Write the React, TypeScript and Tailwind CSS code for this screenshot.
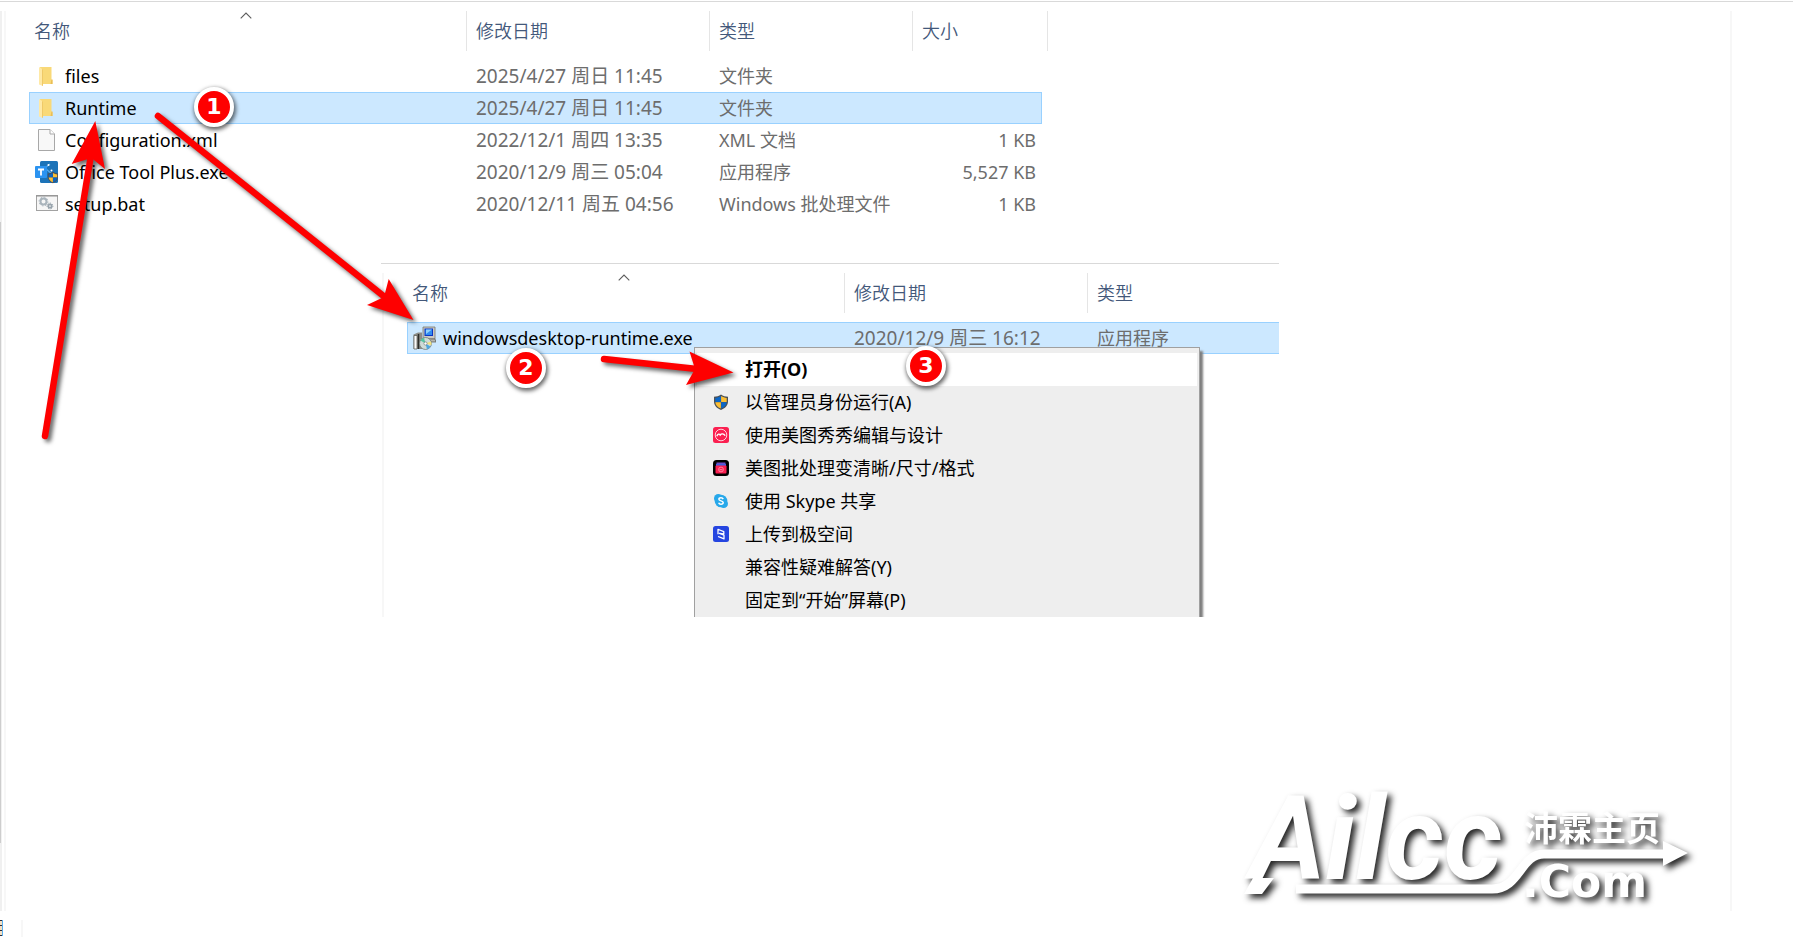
import type { ReactNode } from 'react';

interface FileEntry {
  name: string;
  date: string;
  type: string;
  size?: string;
  icon: ReactNode;
  selected?: boolean;
}

interface MenuEntry {
  label: string;
  icon?: ReactNode;
  active?: boolean;
}

const SHIELD = 'M8 0.5C10 2 12.500 2.700 15 2.700V7.500C15 11.500 12 14.500 8 16C4 14.500 1 11.500 1 7.500V2.700C3.500 2.700 6 2 8 0.500Z';

function ShieldShape(): JSX.Element {
  return (
    <>
      <path d={SHIELD} fill="#4b5158" />
      <path d="M7.900 2C6 3.200 4.300 3.800 2.300 3.900V8H7.900Z" fill="#0a66c8" />
      <path d="M8.100 2C10 3.200 11.700 3.800 13.700 3.900V8H8.100Z" fill="#fcbf34" />
      <path d="M2.300 8.200H7.900V14.600C4.600 13.300 2.500 11 2.300 8.200Z" fill="#fcbf34" />
      <path d="M13.700 8.200H8.100V14.600C11.400 13.300 13.500 11 13.700 8.200Z" fill="#0a66c8" />
    </>
  );
}

function FolderIcon(): JSX.Element {
  return (
    <svg className="h-6 w-6 shrink-0" viewBox="0 0 24 24" aria-hidden="true">
      <path d="M6 3H17.500V15.500L18.500 16V20H8Z" fill="#f9d978" />
      <path d="M17.500 15.500h1V20h-2z" fill="#e9bd57" />
      <path d="M5 3L9 5.500V22L5 20.500Z" fill="#ffe9a6" />
      <path d="M9 5.500V22l-1-.4V5z" fill="#efc968" />
    </svg>
  );
}

function PageIcon(): JSX.Element {
  return (
    <svg className="h-6 w-6 shrink-0" viewBox="0 0 24 24" aria-hidden="true">
      <path d="M4.500 1.500H16L20.500 6V22.500H4.500Z" fill="#f8f8f8" stroke="#a8a8a8" />
      <path d="M16 1.500V6H20.500" fill="#fff" stroke="#a8a8a8" />
    </svg>
  );
}

function OfficeToolIcon(): JSX.Element {
  return (
    <svg className="h-6 w-6 shrink-0" viewBox="0 0 24 24" aria-hidden="true">
      <rect x="6" y="1" width="18" height="22" rx="1.500" fill="#1c73b8" />
      <path d="M11 8l5-4M12 9l6 5" stroke="#57a9e6" strokeWidth="1.200" fill="none" />
      <circle cx="14.500" cy="5" r="1" fill="#fff" />
      <circle cx="17.500" cy="10.500" r="1" fill="#fff" />
      <rect x="1" y="6" width="12" height="12" rx="1" fill="#2b93f0" />
      <path d="M4 9.500H10M7 9.500V15.500" stroke="#fff" strokeWidth="1.800" />
      <g transform="translate(13 11.500) scale(0.740)">
        <ShieldShape />
      </g>
    </svg>
  );
}

function BatchIcon(): JSX.Element {
  return (
    <svg className="h-6 w-6 shrink-0" viewBox="0 0 24 24" aria-hidden="true">
      <rect x="2.500" y="3.500" width="21" height="15" fill="#f6f6f6" stroke="#a2a2a2" />
      <path d="M2 4H24" stroke="#8f8f8f" />
      <circle cx="9.500" cy="9.500" r="3" fill="none" stroke="#a9b4bc" strokeWidth="2" />
      <circle cx="9.500" cy="9.500" r="4.400" fill="none" stroke="#a9b4bc" strokeDasharray="1.700 1.700" />
      <circle cx="16" cy="14" r="1.700" fill="none" stroke="#97a3ac" strokeWidth="1.700" />
      <circle cx="16" cy="14" r="2.900" fill="none" stroke="#97a3ac" strokeDasharray="1.300 1.300" />
    </svg>
  );
}

function InstallerIcon(): JSX.Element {
  return (
    <svg className="h-6 w-6 shrink-0" viewBox="0 0 24 24" aria-hidden="true">
      <path d="M11 1H23V13H11Z" fill="#c9c9c4" stroke="#77776f" strokeWidth="0.800" />
      <path d="M12.500 2.500H21V10H12.500Z" fill="#0b35c4" />
      <path d="M13.500 3.500H20V9H13.500Z" fill="#2f8bf0" />
      <path d="M14 3.500H20L14 8Z" fill="#8fd0fb" />
      <path d="M14 13h9l1 3h-10z" fill="#b5b5ae" stroke="#55554f" strokeWidth="0.700" />
      <path d="M1.500 8.500L6 6.500H10V23H1.500Z" fill="#8d8d88" />
      <path d="M2 9.500H5V23H2Z" fill="#fafafa" stroke="#55554f" strokeWidth="0.700" />
      <path d="M6.500 8V23" stroke="#2c2c2a" strokeWidth="1.500" />
      <circle cx="13.500" cy="17.500" r="6" fill="#cfdcd8" stroke="#67716e" strokeWidth="0.700" />
      <path d="M13.500 17.500L8.500 14.500A6 6 0 0 1 12 11.700Z" fill="#58c4a0" />
      <path d="M13.500 17.500L18.500 20.500A6 6 0 0 1 15 23.200Z" fill="#4fa6e0" />
      <path d="M13.500 17.500L19 15.500A6 6 0 0 1 19.400 19Z" fill="#f3e27b" />
      <circle cx="13.500" cy="17.500" r="1.600" fill="#fff" stroke="#67716e" strokeWidth="0.600" />
    </svg>
  );
}

function AdminShieldIcon(): JSX.Element {
  return (
    <svg className="h-4 w-4" viewBox="0 0 16 16" aria-hidden="true">
      <ShieldShape />
    </svg>
  );
}

function MeituIcon(): JSX.Element {
  return (
    <svg className="h-4 w-4" viewBox="0 0 16 16" aria-hidden="true">
      <rect width="16" height="16" rx="2.500" fill="#fb1f50" />
      <circle cx="8" cy="8" r="5.800" fill="none" stroke="#ffd3dd" strokeWidth="1" />
      <path d="M3.800 9.300C4.800 6.800 6.300 6.600 7.200 8C8.300 6.400 10.500 6.300 12.200 8.600" fill="none" stroke="#fff" strokeWidth="1.400" />
    </svg>
  );
}

function MeituBatchIcon(): JSX.Element {
  return (
    <svg className="h-4 w-4" viewBox="0 0 16 16" aria-hidden="true">
      <rect width="16" height="16" rx="3.500" fill="#000" />
      <rect x="3.500" y="2.500" width="9" height="3" fill="#6d50c8" />
      <rect x="3" y="4" width="10" height="2" fill="#3f62e0" />
      <rect x="2.500" y="5.500" width="11" height="8" rx="1" fill="#fb1f50" />
      <circle cx="8" cy="9.500" r="2.400" fill="none" stroke="#ff8da6" strokeWidth="0.900" />
      <path d="M6.500 9.700H9.500" stroke="#ff8da6" />
    </svg>
  );
}

function SkypeIcon(): JSX.Element {
  return (
    <svg className="h-4 w-4" viewBox="0 0 16 16" aria-hidden="true">
      <circle cx="5.300" cy="5.300" r="4.300" fill="#28a8ea" />
      <circle cx="10.700" cy="10.700" r="4.300" fill="#28a8ea" />
      <circle cx="8" cy="8" r="6.300" fill="#28a8ea" />
      <path
        d="M10.200 6.100C9.800 5.100 9 4.800 8 4.800C6.700 4.800 5.900 5.400 5.900 6.300C5.900 8.300 10.200 7.500 10.200 9.600C10.200 10.600 9.300 11.200 8 11.200C6.800 11.200 6 10.800 5.700 9.800"
        fill="none"
        stroke="#fff"
        strokeWidth="1.500"
      />
    </svg>
  );
}

function CloudSpaceIcon(): JSX.Element {
  return (
    <svg className="h-4 w-4" viewBox="0 0 16 16" aria-hidden="true">
      <rect width="16" height="16" rx="2.500" fill="#2545e0" />
      <path
        d="M5 8.200V3.300L8 4.500L10.800 5.700V8L6.500 7.300L11 9.200V12.900L8 11.700L5 10.500"
        fill="none"
        stroke="#fff"
        strokeWidth="1.300"
        strokeLinejoin="round"
      />
    </svg>
  );
}

const rootFiles: FileEntry[] = [
  { name: 'files', date: '2025/4/27 周日 11:45', type: '文件夹', icon: <FolderIcon /> },
  { name: 'Runtime', date: '2025/4/27 周日 11:45', type: '文件夹', icon: <FolderIcon />, selected: true },
  { name: 'Configuration.xml', date: '2022/12/1 周四 13:35', type: 'XML 文档', size: '1 KB', icon: <PageIcon /> },
  { name: 'Office Tool Plus.exe', date: '2020/12/9 周三 05:04', type: '应用程序', size: '5,527 KB', icon: <OfficeToolIcon /> },
  { name: 'setup.bat', date: '2020/12/11 周五 04:56', type: 'Windows 批处理文件', size: '1 KB', icon: <BatchIcon /> },
];

const runtimeFiles: FileEntry[] = [
  {
    name: 'windowsdesktop-runtime.exe',
    date: '2020/12/9 周三 16:12',
    type: '应用程序',
    icon: <InstallerIcon />,
    selected: true,
  },
];

const menuEntries: MenuEntry[] = [
  { label: '打开(O)', active: true },
  { label: '以管理员身份运行(A)', icon: <AdminShieldIcon /> },
  { label: '使用美图秀秀编辑与设计', icon: <MeituIcon /> },
  { label: '美图批处理变清晰/尺寸/格式', icon: <MeituBatchIcon /> },
  { label: '使用 Skype 共享', icon: <SkypeIcon /> },
  { label: '上传到极空间', icon: <CloudSpaceIcon /> },
  { label: '兼容性疑难解答(Y)' },
  { label: '固定到“开始”屏幕(P)' },
];

function SortCaret(): JSX.Element {
  return (
    <svg className="absolute top-px left-[211px] h-[7px] w-3" viewBox="0 0 12 7" aria-hidden="true">
      <path d="M0.700 6.300L6 1L11.300 6.300" fill="none" stroke="#5c5c5c" strokeWidth="1.100" />
    </svg>
  );
}

function FileTable({ files, showSize = false }: { files: FileEntry[]; showSize?: boolean }): JSX.Element {
  const cell = (file: FileEntry): string =>
    file.selected ? 'border-y border-[#99d1ff] bg-[#cce8ff]' : 'border-y border-transparent';
  const heading = 'h-10 border-r border-[#e5e5e5] p-0 pl-[9px] text-left text-lg font-[350] text-[#43587a]';

  return (
    <table className={`table-fixed border-separate border-spacing-0 ${showSize ? 'w-[1019px]' : 'w-full'}`}>
      <colgroup>
        <col className="w-[438px]" />
        <col className="w-[243px]" />
        {showSize ? <col className="w-[203px]" /> : <col />}
        {showSize && <col className="w-[129px]" />}
        {showSize && <col className="w-[6px]" />}
      </colgroup>
      <thead>
        <tr>
          <th className="relative h-10 border-r border-[#e5e5e5] p-0 pl-[5px] text-left text-lg font-[350] text-[#43587a]">
            <button type="button">名称</button>
            <SortCaret />
          </th>
          <th className={heading}>
            <button type="button">修改日期</button>
          </th>
          <th className={showSize ? heading : 'p-0 pl-[9px] text-left text-lg font-[350] text-[#43587a]'}>
            <button type="button">类型</button>
          </th>
          {showSize && (
            <th colSpan={2} className={heading}>
              <button type="button">大小</button>
            </th>
          )}
        </tr>
        <tr className="h-[9px]" />
      </thead>
      <tbody className="text-[18px] leading-6 whitespace-nowrap text-[#6d6d6d]">
        {files.map((file) => (
          <tr key={file.name} className="h-8">
            <td className={`p-0 pl-1 text-black ${cell(file)} border-l`}>
              <div className="flex items-center gap-[7px]">
                {file.icon}
                {file.name}
              </div>
            </td>
            <td className={`p-0 pl-[9px] text-[19px] ${cell(file)}`}>{file.date}</td>
            <td className={`p-0 pl-[9px] ${cell(file)}`}>{file.type}</td>
            {showSize && <td className={`p-0 pr-[5px] text-right ${cell(file)} border-r`}>{file.size}</td>}
          </tr>
        ))}
      </tbody>
    </table>
  );
}

function ContextMenu(): JSX.Element {
  return (
    <div
      role="menu"
      className="absolute top-[83px] left-[313px] w-[506px] border border-b-0 border-[#a0a0a0] bg-[#eeeeee] px-[2px] pt-[5px] shadow-[3px_4px_2px_#7f7f7f]"
    >
      {menuEntries.map((entry) => (
        <button
          key={entry.label}
          type="button"
          role="menuitem"
          className={`flex h-[33px] w-full items-center pb-[2px] text-left text-lg text-black ${entry.active ? 'bg-white font-bold' : ''}`}
        >
          <span className="flex w-12 shrink-0 justify-center">{entry.icon}</span>
          {entry.label}
        </button>
      ))}
    </div>
  );
}

function RuntimeWindow(): JSX.Element {
  return (
    <section className="absolute top-[252px] left-[375px] flex h-[354px] w-[898px] overflow-hidden border-t border-[#d9d9d9] bg-white pt-[9px]">
      <div className="ml-px w-[2px] bg-[#f7f7f7]" />
      <div className="ml-[23px] flex-1">
        <FileTable files={runtimeFiles} />
      </div>
      <ContextMenu />
    </section>
  );
}

function Arrows(): JSX.Element {
  return (
    <svg
      className="pointer-events-none absolute top-0 left-0 h-[460px] w-[760px] [filter:drop-shadow(3px_3px_2px_rgba(0,0,0,0.600))]"
      viewBox="0 0 760 460"
      aria-hidden="true"
    >
      <g fill="none" stroke="#fe0000" strokeWidth="6.500" strokeLinecap="round">
        <path d="M45 436L91 155" />
        <path d="M158 116L386 298" />
        <path d="M604 359L697 369" />
      </g>
      <g fill="#fe0000">
        <path d="M95.300 121L105 169L91.500 158L71.700 164Z" />
        <path d="M413.500 320L367 305L384 297L388.700 279Z" />
        <path d="M733.500 372.500L686 385L695 369L689.500 351.500Z" />
      </g>
    </svg>
  );
}

function Step({ value, place }: { value: number; place: string }): JSX.Element {
  return (
    <span
      className={`absolute flex h-10 w-10 items-center justify-center rounded-full border-4 border-white bg-[#fe0000] font-['DejaVu_Sans',sans-serif] text-[22px] leading-none font-bold text-white shadow-[1px_2px_4px_1px_rgba(0,0,0,0.600)] ${place}`}
    >
      {value}
    </span>
  );
}

function SiteLogo(): JSX.Element {
  return (
    <svg
      className="mt-auto mr-5 h-[171px] w-[480px] self-end [filter:drop-shadow(4px_4px_3px_rgba(0,0,0,0.850))]"
      viewBox="0 -30 480 171"
      role="img"
      aria-label="Ailcc.com"
    >
      <g fill="#fff">
        <text x="20" y="109" fontSize="116" fontWeight="700" fontStyle="italic" fontFamily="Roboto, sans-serif">
          Ailcc
        </text>
        <text x="294" y="71" fontSize="34" fontWeight="700" fontFamily="'Noto Sans CJK SC', sans-serif">
          沛霖主页
        </text>
        <text x="292" y="127" fontSize="44" fontWeight="700" fontFamily="'DejaVu Sans', sans-serif">
          .Com
        </text>
        <path d="M433 71L458 83L433 96Z" />
        <path d="M23 108H44L32 124H14Z" />
      </g>
      <path d="M66 119H262C290 119 290 84 314 84H434" fill="none" stroke="#fff" strokeWidth="9" />
    </svg>
  );
}

export default function App(): JSX.Element {
  return (
    <div className="relative flex min-h-screen flex-col overflow-hidden bg-white pt-px font-['Noto_Sans','Noto_Sans_CJK_SC',sans-serif]">
      <div className="mb-[9px] h-px bg-[#d9d9d9]" />

      <div className="flex flex-1">
        {/* Navigation pane scrollbar and splitter */}
        <div className="w-[2px] bg-[#f0f0f0] pt-[211px]">
          <div className="h-[621px] w-px bg-[#cdcdcd]" />
        </div>
        <div className="ml-[2px] w-[2px] bg-[#f7f7f7]" />

        <main className="relative flex flex-1 flex-col">
          <div className="ml-[23px]">
            <FileTable files={rootFiles} showSize />
          </div>
          <RuntimeWindow />
          <SiteLogo />
        </main>

        <div className="mr-[61px] w-[2px] bg-[#f7f7f7]" />
      </div>

      {/* Status bar */}
      <footer className="flex h-9 items-start gap-[18px] pt-[9px]">
        <div className="flex h-4 w-[3px] flex-col justify-between border-r border-[#5ab0f0] bg-[#f5dfc0]">
          <div className="h-px bg-[#2b2b3b]" />
          <div className="h-px bg-[#2b2b3b]" />
          <div className="h-px bg-[#2b2b3b]" />
          <div className="h-px bg-[#2b2b3b]" />
        </div>
        <div className="h-[17px] w-[2px] bg-[#f7f7f7]" />
      </footer>

      <Arrows />
      <Step value={1} place="top-[87px] left-[194px]" />
      <Step value={2} place="top-[348px] left-[506px]" />
      <Step value={3} place="top-[346px] left-[906px]" />
    </div>
  );
}
